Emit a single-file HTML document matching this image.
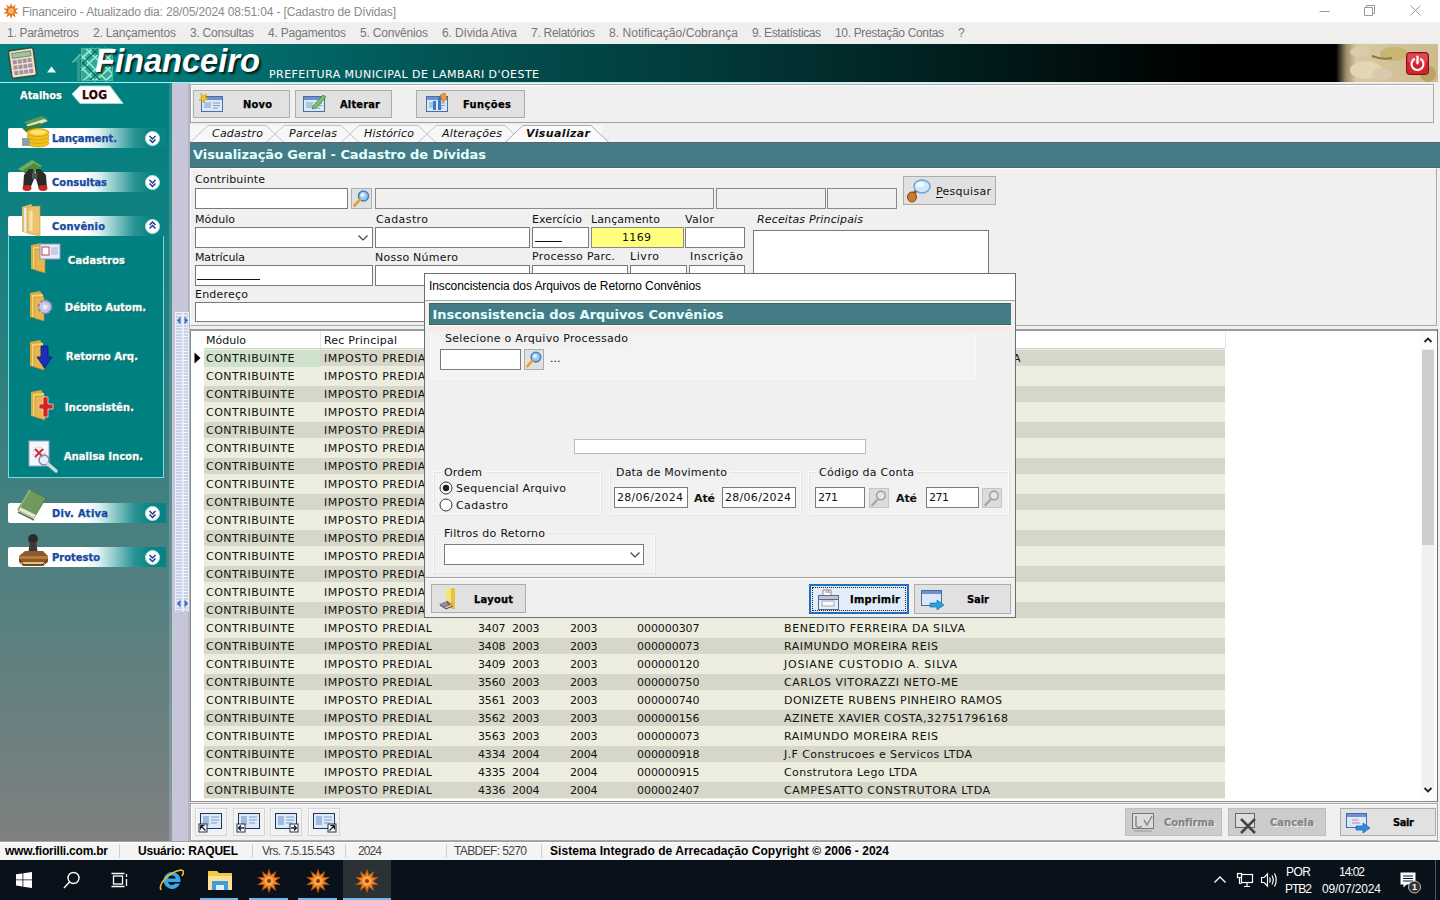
<!DOCTYPE html>
<html lang="pt-BR"><head><meta charset="utf-8"><title>Financeiro - Cadastro de Dívidas</title>
<style>
html,body{margin:0;padding:0}
body{width:1440px;height:900px;overflow:hidden;position:relative;background:#f0f0f0;font-family:"DejaVu Sans",sans-serif}
.b{position:absolute;box-sizing:border-box;display:block}
.t{position:absolute;white-space:nowrap;display:block}
.dv{font-family:"DejaVu Sans",sans-serif}
.dvc{font-family:"DejaVu Sans Condensed","DejaVu Sans",sans-serif;-webkit-text-stroke:.25px currentColor}
.ls{font-family:"Liberation Sans",sans-serif}
</style></head>
<body>
<div class="b " style="left:0px;top:0px;width:1440px;height:22px;background:#fff"></div>
<svg class="b" style="left:3px;top:3px" width="16" height="16" viewBox="0 0 16 16"><path d="M8.0 0.0L9.3 4.0L12.7 1.5L11.4 5.5L15.6 5.5L12.2 8.0L15.6 10.5L11.4 10.5L12.7 14.5L9.3 12.0L8.0 16.0L6.7 12.0L3.3 14.5L4.6 10.5L0.4 10.5L3.8 8.0L0.4 5.5L4.6 5.5L3.3 1.5L6.7 4.0z" fill="#e0711c"/><circle cx="8" cy="8" r="3" fill="#f6b36a"/></svg>
<span class="t ls" style="font-size:12px;line-height:16px;top:3.5px;color:#8a8a8a;letter-spacing:-0.144px;left:22.0px;">Financeiro - Atualizado dia: 28/05/2024 08:51:04 - [Cadastro de Dívidas]</span>
<svg class="b" style="left:1300px;top:0" width="140" height="22" viewBox="0 0 140 22" fill="none" stroke="#9a9a9a" stroke-width="1"><path d="M19.5 11.5h10"/><path d="M64.5 7.5h8v8h-8z M66.5 7.5v-2h8v8h-2"/><path d="M110.5 5.5l10 10 M120.5 5.5l-10 10"/></svg>
<div class="b " style="left:0px;top:22px;width:1440px;height:22px;background:#f1eeee"></div>
<span class="t ls" style="font-size:12px;line-height:16px;top:24.5px;color:#777;letter-spacing:-0.280px;left:7.0px;">1. Parâmetros</span>
<span class="t ls" style="font-size:12px;line-height:16px;top:24.5px;color:#777;letter-spacing:-0.184px;left:93.0px;">2. Lançamentos</span>
<span class="t ls" style="font-size:12px;line-height:16px;top:24.5px;color:#777;letter-spacing:-0.246px;left:190.0px;">3. Consultas</span>
<span class="t ls" style="font-size:12px;line-height:16px;top:24.5px;color:#777;letter-spacing:-0.227px;left:268.0px;">4. Pagamentos</span>
<span class="t ls" style="font-size:12px;line-height:16px;top:24.5px;color:#777;letter-spacing:-0.186px;left:360.0px;">5. Convênios</span>
<span class="t ls" style="font-size:12px;line-height:16px;top:24.5px;color:#777;letter-spacing:-0.122px;left:442.0px;">6. Dívida Ativa</span>
<span class="t ls" style="font-size:12px;line-height:16px;top:24.5px;color:#777;letter-spacing:-0.280px;left:531.0px;">7. Relatórios</span>
<span class="t ls" style="font-size:12px;line-height:16px;top:24.5px;color:#777;letter-spacing:0.042px;left:609.0px;">8. Notificação/Cobrança</span>
<span class="t ls" style="font-size:12px;line-height:16px;top:24.5px;color:#777;letter-spacing:-0.407px;left:752.0px;">9. Estatísticas</span>
<span class="t ls" style="font-size:12px;line-height:16px;top:24.5px;color:#777;letter-spacing:-0.337px;left:835.0px;">10. Prestação Contas</span>
<span class="t ls" style="font-size:12px;line-height:16px;top:24.5px;color:#777;left:958.0px;">?</span>
<div class="b " style="left:0px;top:44px;width:1440px;height:38px;background:linear-gradient(90deg,#038080 0px,#038080 120px,#036a6a 265px,#035050 473px,#023838 723px,#011c1c 973px,#000606 1150px,#000 1220px)"></div>
<div class="b " style="left:0px;top:82px;width:1440px;height:1px;background:linear-gradient(90deg,#a8f0f4 0,#a8f0f4 700px,#e6eeee 1200px)"></div>
<div class="b " style="left:0px;top:43px;width:1440px;height:1px;background:#dfeeee"></div>
<svg class="b" style="left:1336px;top:44px" width="102" height="38" viewBox="0 0 102 38"><defs><linearGradient id="bg1" x1="0" x2="1"><stop offset="0" stop-color="#000"/><stop offset="0.1" stop-color="#9d8d6c"/><stop offset="0.2" stop-color="#d8c9a3"/><stop offset="1" stop-color="#cdbb8e"/></linearGradient></defs><rect width="102" height="38" fill="url(#bg1)"/><ellipse cx="30" cy="26" rx="16" ry="9" fill="#e3d6b4"/><ellipse cx="58" cy="10" rx="14" ry="7" fill="#c9b572"/><ellipse cx="46" cy="30" rx="10" ry="6" fill="#d9c9ae"/><ellipse cx="92" cy="30" rx="8" ry="8" fill="#b9a565"/><ellipse cx="24" cy="8" rx="10" ry="5" fill="#d9cdaa"/><path d="M36 12q10 4 20 2" stroke="#8d7a3c" stroke-width="2" fill="none"/></svg>
<div class="b " style="left:1438px;top:44px;width:2px;height:38px;background:#f0f0f0"></div>
<svg class="b" style="left:1406px;top:52px" width="24" height="24" viewBox="0 0 24 24"><rect x="0.5" y="0.5" width="22" height="22" rx="3" fill="#d3212d" stroke="#7d1016"/><rect x="1.5" y="1.5" width="20" height="9" rx="2" fill="#e9606a" opacity=".6"/><path d="M8 7.2a6 6 0 1 0 7 0" fill="none" stroke="#fff" stroke-width="2.2" stroke-linecap="round"/><path d="M11.5 4.5v7" stroke="#fff" stroke-width="2.2" stroke-linecap="round"/></svg>
<svg class="b" style="left:7px;top:46px" width="32" height="34" viewBox="0 0 32 34"><g transform="rotate(-8 16 17)"><rect x="3" y="3" width="25" height="28" rx="2" fill="#e9e4d2" stroke="#3d4a3a" stroke-width="1.6"/><rect x="6" y="6" width="19" height="5" fill="#9dc49a" stroke="#50624e" stroke-width=".6"/><g fill="#a7909c"><rect x="6" y="13" width="4" height="4"/><rect x="11" y="13" width="4" height="4"/><rect x="16" y="13" width="4" height="4"/><rect x="21" y="13" width="4" height="4"/><rect x="6" y="18.500" width="4" height="4"/><rect x="11" y="18.500" width="4" height="4"/><rect x="16" y="18.500" width="4" height="4"/><rect x="21" y="18.500" width="4" height="4"/><rect x="6" y="24" width="4" height="4"/><rect x="11" y="24" width="4" height="4"/><rect x="16" y="24" width="4" height="4"/><rect x="21" y="24" width="4" height="4"/></g></g></svg>
<svg class="b" style="left:47px;top:66px" width="9" height="7" viewBox="0 0 9 7"><path d="M0 6.500L4.500 0.500L9 6.500z" fill="#e8ffff"/></svg>
<svg class="b" style="left:71px;top:45px" width="44" height="37" viewBox="0 0 44 37"><path d="M2 17L9 9v27h-3v-19z" fill="#2a9a90"/><path d="M1.500 17.500L9.500 9" stroke="#59c4b4" stroke-width="1.400" fill="none"/><path d="M9 12h4v24h-4z" fill="#15807a"/><rect x="10" y="3" width="32" height="33" fill="#34a892"/><g fill="none" stroke="#95ecd4" stroke-width="1.700"><path d="M10 14L22 3M10 26L34 3M12 36L42 8M24 36L42 20M34 36l8-7"/><path d="M14 3l28 26M26 3l16 14M10 10l26 26M10 22l14 14"/></g><g fill="none" stroke="#0f6f68" stroke-width="1.200"><path d="M10 20L28 3M18 36L42 14M20 3l22 20M10 16l20 20"/></g><rect x="10.500" y="3.500" width="31" height="32" fill="none" stroke="#4fb8a4"/></svg>
<span class="t ls" style="font-size:32.7px;line-height:40px;top:41.2px;color:#fff;letter-spacing:-0.039px;left:95.0px;font-weight:bold;font-style:italic;text-shadow:2px 2px 2px rgba(0,0,0,.75);">Financeiro</span>
<span class="t dv" style="font-size:11px;line-height:15px;top:66.5px;color:#fff;letter-spacing:0.440px;left:269.0px;">PREFEITURA MUNICIPAL DE LAMBARI D'OESTE</span>
<div class="b " style="left:0px;top:83px;width:173px;height:759px;background:linear-gradient(180deg,#008080 0%,#058080 8%,#808080 100%)"></div>
<div class="b " style="left:169px;top:83px;width:3px;height:759px;background:linear-gradient(180deg,#2a9090,#8c9a9c)"></div>
<div class="b " style="left:172px;top:83px;width:18px;height:759px;background:#c6c6d8"></div>
<div class="b " style="left:188px;top:83px;width:2px;height:759px;background:#b4b4c6"></div>
<div class="b " style="left:175px;top:312px;width:14px;height:300px;background:repeating-linear-gradient(180deg,#eef 0 1px,transparent 1px 3px),#c9d2e4;border-left:1px solid #e8eef8;border-right:1px solid #e8eef8"><div class="b" style="left:6px;top:0;width:2px;height:300px;background:#e8eef8"></div></div>
<svg class="b" style="left:176px;top:316px" width="13" height="9" viewBox="0 0 13 9"><path d="M4.500 0.500v8L1 4.500z" fill="#3a6fc0"/><path d="M8.500 0.500v8L12 4.500z" fill="#3a6fc0"/></svg>
<svg class="b" style="left:176px;top:599px" width="13" height="9" viewBox="0 0 13 9"><path d="M4.500 0.500v8L1 4.500z" fill="#3a6fc0"/><path d="M8.500 0.500v8L12 4.500z" fill="#3a6fc0"/></svg>
<span class="t dvc" style="font-size:11px;line-height:15px;top:87.5px;color:#fff;letter-spacing:-0.033px;left:20.0px;font-weight:bold;text-shadow:0 0 2px #004a4a;">Atalhos</span>
<svg class="b" style="left:71px;top:85px" width="54" height="20" viewBox="0 0 54 20"><path d="M9 1h30l13 17.500h-43L1 9z" fill="#fff" stroke="#9edcdc" stroke-width="1"/></svg>
<span class="t dvc" style="font-size:12px;line-height:16px;top:87.0px;color:#300;letter-spacing:0.257px;left:82.0px;font-weight:bold;">LOG</span>
<div class="b " style="left:8px;top:128px;width:158px;height:20px;background:linear-gradient(90deg,#fff 0,#fff 76px,#e0f2f2 90px,#86c6c6 108px,#2a9494 126px,#0a8484 142px,#088383 158px);border-radius:2px 0 0 2px"></div>
<span class="t dvc" style="font-size:11px;line-height:15px;top:131.0px;color:#1a4aa0;letter-spacing:-0.015px;left:52.0px;font-weight:bold;text-shadow:0 0 1px #cde;">Lançament.</span>
<svg class="b" style="left:145px;top:131px" width="15" height="15" viewBox="0 0 15 15"><circle cx="7.500" cy="7.500" r="7" fill="#fff" stroke="#bfe3e3"/><g transform="translate(1 1)"><path d="M3.500 4l3 3 3-3M3.500 7.500l3 3 3-3" fill="none" stroke="#163f8c" stroke-width="1.5"/></g></svg>
<div class="b " style="left:8px;top:172px;width:158px;height:20px;background:linear-gradient(90deg,#fff 0,#fff 76px,#e0f2f2 90px,#86c6c6 108px,#2a9494 126px,#0a8484 142px,#088383 158px);border-radius:2px 0 0 2px"></div>
<span class="t dvc" style="font-size:11px;line-height:15px;top:175.0px;color:#1a4aa0;letter-spacing:0.033px;left:52.0px;font-weight:bold;text-shadow:0 0 1px #cde;">Consultas</span>
<svg class="b" style="left:145px;top:175px" width="15" height="15" viewBox="0 0 15 15"><circle cx="7.500" cy="7.500" r="7" fill="#fff" stroke="#bfe3e3"/><g transform="translate(1 1)"><path d="M3.500 4l3 3 3-3M3.500 7.500l3 3 3-3" fill="none" stroke="#163f8c" stroke-width="1.5"/></g></svg>
<div class="b " style="left:8px;top:216px;width:158px;height:20px;background:linear-gradient(90deg,#fff 0,#fff 76px,#e0f2f2 90px,#86c6c6 108px,#2a9494 126px,#0a8484 142px,#088383 158px);border-radius:2px 0 0 2px"></div>
<span class="t dvc" style="font-size:11px;line-height:15px;top:219.0px;color:#1a4aa0;letter-spacing:0.213px;left:52.0px;font-weight:bold;text-shadow:0 0 1px #cde;">Convênio</span>
<svg class="b" style="left:145px;top:219px" width="15" height="15" viewBox="0 0 15 15"><circle cx="7.500" cy="7.500" r="7" fill="#fff" stroke="#bfe3e3"/><g transform="translate(1 1)"><path d="M3.500 8.500l3-3 3 3M3.500 5l3-3 3 3" fill="none" stroke="#163f8c" stroke-width="1.5"/></g></svg>
<div class="b " style="left:8px;top:503px;width:158px;height:20px;background:linear-gradient(90deg,#fff 0,#fff 76px,#e0f2f2 90px,#86c6c6 108px,#2a9494 126px,#0a8484 142px,#088383 158px);border-radius:2px 0 0 2px"></div>
<span class="t dvc" style="font-size:11px;line-height:15px;top:506.0px;color:#1a4aa0;letter-spacing:0.303px;left:52.0px;font-weight:bold;text-shadow:0 0 1px #cde;">Div. Ativa</span>
<svg class="b" style="left:145px;top:506px" width="15" height="15" viewBox="0 0 15 15"><circle cx="7.500" cy="7.500" r="7" fill="#fff" stroke="#bfe3e3"/><g transform="translate(1 1)"><path d="M3.500 4l3 3 3-3M3.500 7.500l3 3 3-3" fill="none" stroke="#163f8c" stroke-width="1.5"/></g></svg>
<div class="b " style="left:8px;top:547px;width:158px;height:20px;background:linear-gradient(90deg,#fff 0,#fff 76px,#e0f2f2 90px,#86c6c6 108px,#2a9494 126px,#0a8484 142px,#088383 158px);border-radius:2px 0 0 2px"></div>
<span class="t dvc" style="font-size:11px;line-height:15px;top:550.0px;color:#1a4aa0;letter-spacing:0.028px;left:52.0px;font-weight:bold;text-shadow:0 0 1px #cde;">Protesto</span>
<svg class="b" style="left:145px;top:550px" width="15" height="15" viewBox="0 0 15 15"><circle cx="7.500" cy="7.500" r="7" fill="#fff" stroke="#bfe3e3"/><g transform="translate(1 1)"><path d="M3.500 4l3 3 3-3M3.500 7.500l3 3 3-3" fill="none" stroke="#163f8c" stroke-width="1.5"/></g></svg>
<div class="b " style="left:8px;top:236px;width:156px;height:242px;background:#008080;border:1px solid #7fdada;border-top:none"></div>
<span class="t dvc" style="font-size:11px;line-height:15px;top:252.5px;color:#f4ffff;letter-spacing:0.138px;left:68.0px;font-weight:bold;text-shadow:1px 1px 1px #044,0 0 2px #8dd;">Cadastros</span>
<span class="t dvc" style="font-size:11px;line-height:15px;top:299.5px;color:#f4ffff;letter-spacing:0.026px;left:65.0px;font-weight:bold;text-shadow:1px 1px 1px #044,0 0 2px #8dd;">Débito Autom.</span>
<span class="t dvc" style="font-size:11px;line-height:15px;top:348.5px;color:#f4ffff;letter-spacing:0.052px;left:66.0px;font-weight:bold;text-shadow:1px 1px 1px #044,0 0 2px #8dd;">Retorno Arq.</span>
<span class="t dvc" style="font-size:11px;line-height:15px;top:399.5px;color:#f4ffff;letter-spacing:0.103px;left:65.0px;font-weight:bold;text-shadow:1px 1px 1px #044,0 0 2px #8dd;">Inconsistên.</span>
<span class="t dvc" style="font-size:11px;line-height:15px;top:448.5px;color:#f4ffff;letter-spacing:0.048px;left:64.0px;font-weight:bold;text-shadow:1px 1px 1px #044,0 0 2px #8dd;">Analisa Incon.</span>
<svg class="b" style="left:18px;top:114px" width="34" height="36" viewBox="0 0 34 36"><path d="M6 8l18-6 6 3-18 7z" fill="#5b9a46"/><path d="M8 11l18-6 4 2-18 7z" fill="#d8e8cf"/><path d="M4 14l18-5 4 3-18 6z" fill="#3f7d35"/><g fill="#f2c21b" stroke="#c99a0a" stroke-width=".7"><ellipse cx="20" cy="29" rx="11" ry="4"/><ellipse cx="20" cy="25.500" rx="11" ry="4"/><ellipse cx="20" cy="22" rx="11" ry="4"/><ellipse cx="20" cy="18.500" rx="11" ry="4"/></g><ellipse cx="20" cy="18.300" rx="8" ry="2.600" fill="#fbe27a"/><rect x="4" y="24" width="8" height="8" fill="#8fa39a"/></svg>
<svg class="b" style="left:16px;top:157px" width="36" height="36" viewBox="0 0 36 36"><path d="M2 12l14-9 10 6-14 9z" fill="#6fae5a"/><path d="M6 14l12-8 8 5-12 8z" fill="#4c8c3f"/><g fill="#2b2b2b"><path d="M8 18l5-6h4l1 10-4 10h-7z"/><path d="M20 12h4l6 6 1 14h-8l-3-10z"/></g><ellipse cx="11" cy="31" rx="4.500" ry="3" fill="#c7251f"/><ellipse cx="27" cy="31" rx="4.500" ry="3" fill="#c7251f"/><rect x="16" y="16" width="5" height="6" fill="#555"/></svg>
<svg class="b" style="left:19px;top:203px" width="26" height="34" viewBox="0 0 26 34"><path d="M3 4l9-3 2 3v27l-11-2z" fill="#d9bd7a"/><path d="M5 5l12-2v28l-12-2z" fill="#f4ead0"/><path d="M8 4l13-1v30l-13-3z" fill="#e9c36e" stroke="#c09b48" stroke-width=".6"/><path d="M12 8v20" stroke="#f6e3aa" stroke-width="3"/></svg>
<svg class="b" style="left:28px;top:242px" width="34" height="34" viewBox="0 0 34 34"><path d="M3 3l10-2 2 3v25l-12-2z" fill="#d9a93e"/><path d="M5 5l11-1v26l-11-3z" fill="#f2d27c"/><path d="M7 7l10 0v24l-10-3z" fill="#e8b64a" stroke="#b98a2a" stroke-width=".6"/><rect x="12" y="2" width="20" height="15" fill="#e8ecf8" stroke="#8c94c8"/><rect x="14" y="5" width="7" height="8" fill="#fff" stroke="#b04a5a"/><rect x="23" y="5" width="7" height="8" fill="#c6cde6"/></svg>
<svg class="b" style="left:27px;top:290px" width="34" height="34" viewBox="0 0 34 34"><path d="M3 3l10-2 2 3v25l-12-2z" fill="#d9a93e"/><path d="M5 5l11-1v26l-11-3z" fill="#f2d27c"/><path d="M7 7l10 0v24l-10-3z" fill="#e8b64a" stroke="#b98a2a" stroke-width=".6"/><circle cx="18" cy="17" r="6.500" fill="#c9c4e2" stroke="#8d86c2" stroke-width="2" stroke-dasharray="3 2"/><circle cx="18" cy="17" r="2.500" fill="#eeeaf8"/></svg>
<svg class="b" style="left:27px;top:339px" width="34" height="34" viewBox="0 0 34 34"><path d="M3 3l10-2 2 3v25l-12-2z" fill="#d9a93e"/><path d="M5 5l11-1v26l-11-3z" fill="#f2d27c"/><path d="M7 7l10 0v24l-10-3z" fill="#e8b64a" stroke="#b98a2a" stroke-width=".6"/><path d="M14 7h7v11h4l-7.500 11-7.500-11h4z" fill="#1b2fb8" stroke="#0a1470" stroke-width=".8"/></svg>
<svg class="b" style="left:28px;top:389px" width="34" height="34" viewBox="0 0 34 34"><path d="M3 3l10-2 2 3v25l-12-2z" fill="#d9a93e"/><path d="M5 5l11-1v26l-11-3z" fill="#f2d27c"/><path d="M7 7l10 0v24l-10-3z" fill="#e8b64a" stroke="#b98a2a" stroke-width=".6"/><path d="M15 8h5v7h5v5h-5v8h-5v-8h-4v-5h4z" fill="#d32323" stroke="#f6d6d6" stroke-width=".8"/></svg>
<svg class="b" style="left:26px;top:439px" width="34" height="34" viewBox="0 0 34 34"><rect x="3" y="2" width="20" height="25" fill="#f4f6fb" stroke="#9aa6bd"/><circle cx="13" cy="14" r="6" fill="none" stroke="#b8c0d0" stroke-dasharray="2 2"/><path d="M9 10l8 8M17 10l-8 8" stroke="#d42a3a" stroke-width="2"/><circle cx="18" cy="21" r="5" fill="#dfeaf5" fill-opacity=".6" stroke="#7b8aa0" stroke-width="1.5"/><path d="M22 25l8 7" stroke="#cfd8e4" stroke-width="3.500" stroke-linecap="round"/></svg>
<svg class="b" style="left:16px;top:488px" width="34" height="34" viewBox="0 0 34 34"><path d="M14 2l16 8-12 20-16-8z" fill="#6f9a5e" stroke="#4d7342" stroke-width=".8"/><path d="M2 22l16 8 2-3-16-8z" fill="#e9e4cf"/><path d="M2 24l16 8" stroke="#4d7342" stroke-width="1.5"/><path d="M14 2l-12 20" stroke="#89b178" stroke-width="2"/></svg>
<svg class="b" style="left:15px;top:532px" width="36" height="36" viewBox="0 0 36 36"><circle cx="18" cy="7" r="5" fill="#2c2c2c"/><path d="M15 10h6l2 12h-10z" fill="#3a3a3a"/><path d="M4 24l6-5h18l5 5v6l-5 4h-20l-4-4z" fill="#8a5a2c"/><path d="M4 24h29v3h-29z" fill="#b57b3e"/><path d="M6 31h24" stroke="#e1c08a" stroke-width="2"/><path d="M4 27l5 6h18l6-6" fill="none" stroke="#5b3513" stroke-width="1"/></svg>
<div class="b " style="left:190px;top:83px;width:1250px;height:759px;background:#f0f0f0"></div>
<div class="b " style="left:190px;top:84px;width:1244px;height:39px;background:#f0f0f0;border:1px solid #a8a8a8;border-bottom-color:#a0a0a0;box-shadow:inset 1px 1px 0 #fff"></div>
<div class="b btn" style="left:193px;top:90px;width:97px;height:28px;background:#e1e1e1;border:1px solid #adadad;"></div>
<svg class="b" style="left:199px;top:92px" width="28" height="24" viewBox="0 0 28 24"><rect x="2.500" y="4.500" width="21" height="15" fill="#dbe8f6" stroke="#4a6ea8"/><rect x="3" y="5" width="20" height="3" fill="#6d92cf"/><rect x="5" y="10" width="7" height="6" fill="#a9c4e6"/><path d="M14 11h7M14 13.500h7M14 16h5" stroke="#7f9fc8"/><path d="M2 1l2.500 3 3-2-1 3.500 3 1.500-3.500 1-1 3-1.500-3-3.500 0 2.500-2z" fill="#f6c415" stroke="#c68a00" stroke-width=".5"/></svg>
<span class="t dvc" style="font-size:11px;line-height:15px;top:97.0px;color:#000;letter-spacing:0.222px;left:243.0px;font-weight:bold;">Novo</span>
<div class="b btn" style="left:295px;top:90px;width:97px;height:28px;background:#e1e1e1;border:1px solid #adadad;"></div>
<svg class="b" style="left:301px;top:92px" width="28" height="24" viewBox="0 0 28 24"><rect x="2.500" y="4.500" width="21" height="15" fill="#dbe8f6" stroke="#4a6ea8"/><rect x="3" y="5" width="20" height="3" fill="#6d92cf"/><rect x="5" y="10" width="7" height="6" fill="#a9c4e6"/><path d="M14 11h7M14 13.500h7M14 16h5" stroke="#7f9fc8"/><path d="M12 14l10-11 3 2-10 11-4 1z" fill="#7fbf6a" stroke="#3d7a3a" stroke-width=".7"/></svg>
<span class="t dvc" style="font-size:11px;line-height:15px;top:97.0px;color:#000;letter-spacing:0.177px;left:340.0px;font-weight:bold;">Alterar</span>
<div class="b btn" style="left:416px;top:90px;width:109px;height:28px;background:#e1e1e1;border:1px solid #adadad;"></div>
<svg class="b" style="left:424px;top:92px" width="28" height="24" viewBox="0 0 28 24"><rect x="2.500" y="4.500" width="21" height="15" fill="#dbe8f6" stroke="#4a6ea8"/><rect x="3" y="5" width="20" height="3" fill="#6d92cf"/><rect x="5" y="10" width="7" height="6" fill="#a9c4e6"/><path d="M14 11h7M14 13.500h7M14 16h5" stroke="#7f9fc8"/><path d="M9 18v-9h3v9zM14 18v-13h3v13z" fill="#3d78c8"/><path d="M16 3l5-2 2 6-4 3z" fill="#f39a2a" stroke="#b86a10" stroke-width=".6"/></svg>
<span class="t dvc" style="font-size:11px;line-height:15px;top:97.0px;color:#000;letter-spacing:0.403px;left:463.0px;font-weight:bold;">Funções</span>
<div class="b " style="left:190px;top:123px;width:1250px;height:20px;background:#f0f0f0"></div>
<div class="b " style="left:190px;top:125px;width:412px;height:18px;background:#f7f7f7"></div>
<svg class="b" style="left:190px;top:123px" width="440" height="20" viewBox="0 0 440 20" fill="none" stroke="#c4c4c4" stroke-width="1"><path d="M0 19.500L18 2.500H76L94 19.500" fill="none"/><path d="M76 19.500L94 2.500H151L169 19.500" fill="none"/><path d="M151 19.500L169 2.500H228L246 19.500" fill="none"/><path d="M228 19.500L246 2.500H315L333 19.500" fill="none"/><path d="M315 19.500L333 2.500H401L419 19.500" fill="#fbfbfb" stroke="#aaa"/></svg>
<span class="t dv" style="font-size:11px;line-height:15px;top:126.0px;color:#111;letter-spacing:0.223px;left:212.0px;font-style:oblique;">Cadastro</span>
<span class="t dv" style="font-size:11px;line-height:15px;top:126.0px;color:#111;letter-spacing:0.251px;left:289.0px;font-style:oblique;">Parcelas</span>
<span class="t dv" style="font-size:11px;line-height:15px;top:126.0px;color:#111;letter-spacing:0.193px;left:364.0px;font-style:oblique;">Histórico</span>
<span class="t dv" style="font-size:11px;line-height:15px;top:126.0px;color:#111;letter-spacing:0.200px;left:442.0px;font-style:oblique;">Alterações</span>
<span class="t dv" style="font-size:11px;line-height:15px;top:126.0px;color:#111;letter-spacing:0.369px;left:526.0px;font-weight:bold;font-style:oblique;">Visualizar</span>
<div class="b " style="left:190px;top:142px;width:1250px;height:26px;background:#447b84;border-top:1px solid #5b6668;border-bottom:1px solid #50666b"></div>
<span class="t dv" style="font-size:13px;line-height:18px;top:146.0px;color:#e4ffff;letter-spacing:-0.068px;left:193.0px;font-weight:bold;">Visualização Geral - Cadastro de Dívidas</span>
<div class="b " style="left:190px;top:168px;width:1247px;height:158px;background:#f0f0f0;border:1px solid #a9a9a9;border-top-color:#fff;border-left-color:#fff"></div>
<span class="t dv" style="font-size:11px;line-height:15px;top:171.5px;color:#111;letter-spacing:0.151px;left:195.0px;">Contribuinte</span>
<div class="b inp" style="left:195px;top:188px;width:153px;height:21px;background:#fff;border:1px solid #7a7a7a"></div>
<div class="b " style="left:351px;top:188px;width:21px;height:21px;background:#e1e1e1;border:1px solid #adadad"></div>
<svg class="b" style="left:351px;top:188px" width="21" height="21" viewBox="0 0 21 21"><circle cx="12.500" cy="8" r="5" fill="#9ec9f2" stroke="#3f7fc6" stroke-width="1.600"/><circle cx="11.500" cy="7" r="2" fill="#e8f4ff"/><path d="M9 11.500l-5.500 6" stroke="#e8a13a" stroke-width="2.800" stroke-linecap="round"/></svg>
<div class="b inp" style="left:375px;top:188px;width:339px;height:21px;background:#f0f0f0;border:1px solid #8a8a8a"></div>
<div class="b inp" style="left:716px;top:188px;width:110px;height:21px;background:#f0f0f0;border:1px solid #8a8a8a"></div>
<div class="b inp" style="left:827px;top:188px;width:70px;height:21px;background:#f0f0f0;border:1px solid #8a8a8a"></div>
<div class="b " style="left:903px;top:176px;width:93px;height:29px;background:#e1e1e1;border:1px solid #adadad"></div>
<svg class="b" style="left:906px;top:178px" width="28" height="26" viewBox="0 0 28 26"><ellipse cx="16" cy="8.500" rx="8" ry="6.500" fill="#cfe6fb" stroke="#6ea6dc" stroke-width="1.500"/><ellipse cx="14" cy="6.500" rx="4" ry="2.500" fill="#f4faff"/><path d="M10 13l-5 6" stroke="#8a5a2a" stroke-width="3"/><ellipse cx="6" cy="19" rx="4.500" ry="5" fill="#c97a2a" stroke="#7d4512"/></svg>
<span class="t dv" style="font-size:11px;line-height:15px;top:183.5px;color:#111;letter-spacing:0.282px;left:936.0px;">Pesquisar</span>
<div class="b " style="left:936px;top:197px;width:7px;height:1px;background:#111"></div>
<span class="t dv" style="font-size:11px;line-height:15px;top:211.5px;color:#111;letter-spacing:0.008px;left:195.0px;">Módulo</span>
<span class="t dv" style="font-size:11px;line-height:15px;top:211.5px;color:#111;letter-spacing:0.400px;left:376.0px;">Cadastro</span>
<span class="t dv" style="font-size:11px;line-height:15px;top:211.5px;color:#111;letter-spacing:0.111px;left:532.0px;">Exercício</span>
<span class="t dv" style="font-size:11px;line-height:15px;top:211.5px;color:#111;letter-spacing:0.097px;left:591.0px;">Lançamento</span>
<span class="t dv" style="font-size:11px;line-height:15px;top:211.5px;color:#111;letter-spacing:0.320px;left:685.0px;">Valor</span>
<span class="t dv" style="font-size:11px;line-height:15px;top:211.5px;color:#111;letter-spacing:0.147px;left:757.0px;font-style:oblique;">Receitas Principais</span>
<div class="b inp" style="left:195px;top:227px;width:178px;height:21px;background:#fff;border:1px solid #7a7a7a"></div>
<svg class="b" style="left:357px;top:234px" width="12" height="8" viewBox="0 0 12 8"><path d="M1.500 1.500l4.500 4.500 4.500-4.500" fill="none" stroke="#444" stroke-width="1.200"/></svg>
<div class="b inp" style="left:375px;top:227px;width:155px;height:21px;background:#fff;border:1px solid #7a7a7a"></div>
<div class="b inp" style="left:532px;top:227px;width:57px;height:21px;background:#fff;border:1px solid #7a7a7a"></div>
<div class="b " style="left:535px;top:241px;width:27px;height:1px;background:#111"></div>
<div class="b inp" style="left:591px;top:227px;width:93px;height:21px;background:#ffff7d;border:1px solid #8a8a8a"></div>
<span class="t dv" style="font-size:11px;line-height:15px;top:230.0px;color:#111;letter-spacing:0.335px;left:622.0px;">1169</span>
<div class="b inp" style="left:685px;top:227px;width:60px;height:21px;background:#fff;border:1px solid #7a7a7a"></div>
<div class="b inp" style="left:753px;top:230px;width:236px;height:58px;background:#fff;border:1px solid #7a7a7a"></div>
<span class="t dv" style="font-size:11px;line-height:15px;top:249.5px;color:#111;letter-spacing:-0.117px;left:195.0px;">Matrícula</span>
<span class="t dv" style="font-size:11px;line-height:15px;top:249.5px;color:#111;letter-spacing:0.242px;left:375.0px;">Nosso Número</span>
<span class="t dv" style="font-size:11px;line-height:15px;top:248.5px;color:#111;letter-spacing:0.334px;left:532.0px;">Processo Parc.</span>
<span class="t dv" style="font-size:11px;line-height:15px;top:248.5px;color:#111;letter-spacing:0.574px;left:630.0px;">Livro</span>
<span class="t dv" style="font-size:11px;line-height:15px;top:248.5px;color:#111;letter-spacing:0.488px;left:690.0px;">Inscrição</span>
<div class="b inp" style="left:195px;top:265px;width:178px;height:21px;background:#fff;border:1px solid #7a7a7a"></div>
<div class="b " style="left:197px;top:279px;width:63px;height:1px;background:#111"></div>
<div class="b inp" style="left:375px;top:265px;width:155px;height:21px;background:#fff;border:1px solid #7a7a7a"></div>
<div class="b inp" style="left:532px;top:265px;width:96px;height:21px;background:#fff;border:1px solid #7a7a7a"></div>
<div class="b inp" style="left:630px;top:265px;width:57px;height:21px;background:#fff;border:1px solid #7a7a7a"></div>
<div class="b inp" style="left:689px;top:265px;width:56px;height:21px;background:#fff;border:1px solid #7a7a7a"></div>
<span class="t dv" style="font-size:11px;line-height:15px;top:286.5px;color:#111;letter-spacing:0.215px;left:195.0px;">Endereço</span>
<div class="b inp" style="left:195px;top:302px;width:520px;height:20px;background:#fff;border:1px solid #7a7a7a"></div>
<div class="b " style="left:190px;top:329px;width:1248px;height:473px;background:#fff;border:1px solid #8a8a8a;border-top:2px solid #9a9a9a"></div>
<span class="t dv" style="font-size:11px;line-height:15px;top:332.5px;color:#111;letter-spacing:0.008px;left:206.0px;">Módulo</span>
<span class="t dv" style="font-size:11px;line-height:15px;top:332.5px;color:#111;letter-spacing:0.222px;left:324.0px;">Rec Principal</span>
<div class="b " style="left:204px;top:348px;width:1021px;height:1px;background:#d2d2cc"></div>
<div class="b " style="left:320px;top:332px;width:1px;height:16px;background:#e4e4e4"></div>
<div class="b " style="left:1225px;top:332px;width:1px;height:16px;background:#e4e4e4"></div>
<div class="b " style="left:204px;top:349px;width:1021px;height:18px;background:#ecedde"></div>
<div class="b " style="left:204px;top:350px;width:1021px;height:16px;background:#d6d7c8"></div>
<div class="b " style="left:204px;top:350px;width:116px;height:17px;background:#cfe2cc"></div>
<span class="t dv" style="font-size:11px;line-height:15px;top:350.5px;color:#111;letter-spacing:0.508px;left:206.0px;">CONTRIBUINTE</span>
<span class="t dv" style="font-size:11px;line-height:15px;top:350.5px;color:#111;letter-spacing:0.537px;left:324.0px;">IMPOSTO PREDIAL</span>
<div class="b " style="left:204px;top:367px;width:1021px;height:18px;background:#ecedde"></div>
<span class="t dv" style="font-size:11px;line-height:15px;top:368.5px;color:#111;letter-spacing:0.508px;left:206.0px;">CONTRIBUINTE</span>
<span class="t dv" style="font-size:11px;line-height:15px;top:368.5px;color:#111;letter-spacing:0.537px;left:324.0px;">IMPOSTO PREDIAL</span>
<div class="b " style="left:204px;top:385px;width:1021px;height:18px;background:#ecedde"></div>
<div class="b " style="left:204px;top:386px;width:1021px;height:16px;background:#d6d7c8"></div>
<span class="t dv" style="font-size:11px;line-height:15px;top:386.5px;color:#111;letter-spacing:0.508px;left:206.0px;">CONTRIBUINTE</span>
<span class="t dv" style="font-size:11px;line-height:15px;top:386.5px;color:#111;letter-spacing:0.537px;left:324.0px;">IMPOSTO PREDIAL</span>
<div class="b " style="left:204px;top:403px;width:1021px;height:18px;background:#ecedde"></div>
<span class="t dv" style="font-size:11px;line-height:15px;top:404.5px;color:#111;letter-spacing:0.508px;left:206.0px;">CONTRIBUINTE</span>
<span class="t dv" style="font-size:11px;line-height:15px;top:404.5px;color:#111;letter-spacing:0.537px;left:324.0px;">IMPOSTO PREDIAL</span>
<div class="b " style="left:204px;top:421px;width:1021px;height:18px;background:#ecedde"></div>
<div class="b " style="left:204px;top:422px;width:1021px;height:16px;background:#d6d7c8"></div>
<span class="t dv" style="font-size:11px;line-height:15px;top:422.5px;color:#111;letter-spacing:0.508px;left:206.0px;">CONTRIBUINTE</span>
<span class="t dv" style="font-size:11px;line-height:15px;top:422.5px;color:#111;letter-spacing:0.537px;left:324.0px;">IMPOSTO PREDIAL</span>
<div class="b " style="left:204px;top:439px;width:1021px;height:18px;background:#ecedde"></div>
<span class="t dv" style="font-size:11px;line-height:15px;top:440.5px;color:#111;letter-spacing:0.508px;left:206.0px;">CONTRIBUINTE</span>
<span class="t dv" style="font-size:11px;line-height:15px;top:440.5px;color:#111;letter-spacing:0.537px;left:324.0px;">IMPOSTO PREDIAL</span>
<div class="b " style="left:204px;top:457px;width:1021px;height:18px;background:#ecedde"></div>
<div class="b " style="left:204px;top:458px;width:1021px;height:16px;background:#d6d7c8"></div>
<span class="t dv" style="font-size:11px;line-height:15px;top:458.5px;color:#111;letter-spacing:0.508px;left:206.0px;">CONTRIBUINTE</span>
<span class="t dv" style="font-size:11px;line-height:15px;top:458.5px;color:#111;letter-spacing:0.537px;left:324.0px;">IMPOSTO PREDIAL</span>
<div class="b " style="left:204px;top:475px;width:1021px;height:18px;background:#ecedde"></div>
<span class="t dv" style="font-size:11px;line-height:15px;top:476.5px;color:#111;letter-spacing:0.508px;left:206.0px;">CONTRIBUINTE</span>
<span class="t dv" style="font-size:11px;line-height:15px;top:476.5px;color:#111;letter-spacing:0.537px;left:324.0px;">IMPOSTO PREDIAL</span>
<div class="b " style="left:204px;top:493px;width:1021px;height:18px;background:#ecedde"></div>
<div class="b " style="left:204px;top:494px;width:1021px;height:16px;background:#d6d7c8"></div>
<span class="t dv" style="font-size:11px;line-height:15px;top:494.5px;color:#111;letter-spacing:0.508px;left:206.0px;">CONTRIBUINTE</span>
<span class="t dv" style="font-size:11px;line-height:15px;top:494.5px;color:#111;letter-spacing:0.537px;left:324.0px;">IMPOSTO PREDIAL</span>
<div class="b " style="left:204px;top:511px;width:1021px;height:18px;background:#ecedde"></div>
<span class="t dv" style="font-size:11px;line-height:15px;top:512.5px;color:#111;letter-spacing:0.508px;left:206.0px;">CONTRIBUINTE</span>
<span class="t dv" style="font-size:11px;line-height:15px;top:512.5px;color:#111;letter-spacing:0.537px;left:324.0px;">IMPOSTO PREDIAL</span>
<div class="b " style="left:204px;top:529px;width:1021px;height:18px;background:#ecedde"></div>
<div class="b " style="left:204px;top:530px;width:1021px;height:16px;background:#d6d7c8"></div>
<span class="t dv" style="font-size:11px;line-height:15px;top:530.5px;color:#111;letter-spacing:0.508px;left:206.0px;">CONTRIBUINTE</span>
<span class="t dv" style="font-size:11px;line-height:15px;top:530.5px;color:#111;letter-spacing:0.537px;left:324.0px;">IMPOSTO PREDIAL</span>
<div class="b " style="left:204px;top:547px;width:1021px;height:18px;background:#ecedde"></div>
<span class="t dv" style="font-size:11px;line-height:15px;top:548.5px;color:#111;letter-spacing:0.508px;left:206.0px;">CONTRIBUINTE</span>
<span class="t dv" style="font-size:11px;line-height:15px;top:548.5px;color:#111;letter-spacing:0.537px;left:324.0px;">IMPOSTO PREDIAL</span>
<div class="b " style="left:204px;top:565px;width:1021px;height:18px;background:#ecedde"></div>
<div class="b " style="left:204px;top:566px;width:1021px;height:16px;background:#d6d7c8"></div>
<span class="t dv" style="font-size:11px;line-height:15px;top:566.5px;color:#111;letter-spacing:0.508px;left:206.0px;">CONTRIBUINTE</span>
<span class="t dv" style="font-size:11px;line-height:15px;top:566.5px;color:#111;letter-spacing:0.537px;left:324.0px;">IMPOSTO PREDIAL</span>
<div class="b " style="left:204px;top:583px;width:1021px;height:18px;background:#ecedde"></div>
<span class="t dv" style="font-size:11px;line-height:15px;top:584.5px;color:#111;letter-spacing:0.508px;left:206.0px;">CONTRIBUINTE</span>
<span class="t dv" style="font-size:11px;line-height:15px;top:584.5px;color:#111;letter-spacing:0.537px;left:324.0px;">IMPOSTO PREDIAL</span>
<div class="b " style="left:204px;top:601px;width:1021px;height:18px;background:#ecedde"></div>
<div class="b " style="left:204px;top:602px;width:1021px;height:16px;background:#d6d7c8"></div>
<span class="t dv" style="font-size:11px;line-height:15px;top:602.5px;color:#111;letter-spacing:0.508px;left:206.0px;">CONTRIBUINTE</span>
<span class="t dv" style="font-size:11px;line-height:15px;top:602.5px;color:#111;letter-spacing:0.537px;left:324.0px;">IMPOSTO PREDIAL</span>
<div class="b " style="left:204px;top:619px;width:1021px;height:18px;background:#ecedde"></div>
<span class="t dv" style="font-size:11px;line-height:15px;top:620.5px;color:#111;letter-spacing:0.508px;left:206.0px;">CONTRIBUINTE</span>
<span class="t dv" style="font-size:11px;line-height:15px;top:620.5px;color:#111;letter-spacing:0.537px;left:324.0px;">IMPOSTO PREDIAL</span>
<span class="t dv" style="font-size:11px;line-height:15px;top:620.5px;color:#111;letter-spacing:-0.165px;left:478.0px;">3407</span>
<span class="t dv" style="font-size:11px;line-height:15px;top:620.5px;color:#111;letter-spacing:-0.165px;left:512.0px;">2003</span>
<span class="t dv" style="font-size:11px;line-height:15px;top:620.5px;color:#111;letter-spacing:-0.165px;left:570.0px;">2003</span>
<span class="t dv" style="font-size:11px;line-height:15px;top:620.5px;color:#111;letter-spacing:-0.061px;left:637.0px;">000000307</span>
<span class="t dv" style="font-size:11px;line-height:15px;top:620.5px;color:#111;letter-spacing:0.599px;left:784.0px;">BENEDITO FERREIRA DA SILVA</span>
<div class="b " style="left:204px;top:637px;width:1021px;height:18px;background:#ecedde"></div>
<div class="b " style="left:204px;top:638px;width:1021px;height:16px;background:#d6d7c8"></div>
<span class="t dv" style="font-size:11px;line-height:15px;top:638.5px;color:#111;letter-spacing:0.508px;left:206.0px;">CONTRIBUINTE</span>
<span class="t dv" style="font-size:11px;line-height:15px;top:638.5px;color:#111;letter-spacing:0.537px;left:324.0px;">IMPOSTO PREDIAL</span>
<span class="t dv" style="font-size:11px;line-height:15px;top:638.5px;color:#111;letter-spacing:-0.165px;left:478.0px;">3408</span>
<span class="t dv" style="font-size:11px;line-height:15px;top:638.5px;color:#111;letter-spacing:-0.165px;left:512.0px;">2003</span>
<span class="t dv" style="font-size:11px;line-height:15px;top:638.5px;color:#111;letter-spacing:-0.165px;left:570.0px;">2003</span>
<span class="t dv" style="font-size:11px;line-height:15px;top:638.5px;color:#111;letter-spacing:-0.061px;left:637.0px;">000000073</span>
<span class="t dv" style="font-size:11px;line-height:15px;top:638.5px;color:#111;letter-spacing:0.531px;left:784.0px;">RAIMUNDO MOREIRA REIS</span>
<div class="b " style="left:204px;top:655px;width:1021px;height:18px;background:#ecedde"></div>
<span class="t dv" style="font-size:11px;line-height:15px;top:656.5px;color:#111;letter-spacing:0.508px;left:206.0px;">CONTRIBUINTE</span>
<span class="t dv" style="font-size:11px;line-height:15px;top:656.5px;color:#111;letter-spacing:0.537px;left:324.0px;">IMPOSTO PREDIAL</span>
<span class="t dv" style="font-size:11px;line-height:15px;top:656.5px;color:#111;letter-spacing:-0.165px;left:478.0px;">3409</span>
<span class="t dv" style="font-size:11px;line-height:15px;top:656.5px;color:#111;letter-spacing:-0.165px;left:512.0px;">2003</span>
<span class="t dv" style="font-size:11px;line-height:15px;top:656.5px;color:#111;letter-spacing:-0.165px;left:570.0px;">2003</span>
<span class="t dv" style="font-size:11px;line-height:15px;top:656.5px;color:#111;letter-spacing:-0.061px;left:637.0px;">000000120</span>
<span class="t dv" style="font-size:11px;line-height:15px;top:656.5px;color:#111;letter-spacing:0.787px;left:784.0px;">JOSIANE CUSTODIO A. SILVA</span>
<div class="b " style="left:204px;top:673px;width:1021px;height:18px;background:#ecedde"></div>
<div class="b " style="left:204px;top:674px;width:1021px;height:16px;background:#d6d7c8"></div>
<span class="t dv" style="font-size:11px;line-height:15px;top:674.5px;color:#111;letter-spacing:0.508px;left:206.0px;">CONTRIBUINTE</span>
<span class="t dv" style="font-size:11px;line-height:15px;top:674.5px;color:#111;letter-spacing:0.537px;left:324.0px;">IMPOSTO PREDIAL</span>
<span class="t dv" style="font-size:11px;line-height:15px;top:674.5px;color:#111;letter-spacing:-0.165px;left:478.0px;">3560</span>
<span class="t dv" style="font-size:11px;line-height:15px;top:674.5px;color:#111;letter-spacing:-0.165px;left:512.0px;">2003</span>
<span class="t dv" style="font-size:11px;line-height:15px;top:674.5px;color:#111;letter-spacing:-0.165px;left:570.0px;">2003</span>
<span class="t dv" style="font-size:11px;line-height:15px;top:674.5px;color:#111;letter-spacing:-0.061px;left:637.0px;">000000750</span>
<span class="t dv" style="font-size:11px;line-height:15px;top:674.5px;color:#111;letter-spacing:0.536px;left:784.0px;">CARLOS VITORAZZI NETO-ME</span>
<div class="b " style="left:204px;top:691px;width:1021px;height:18px;background:#ecedde"></div>
<span class="t dv" style="font-size:11px;line-height:15px;top:692.5px;color:#111;letter-spacing:0.508px;left:206.0px;">CONTRIBUINTE</span>
<span class="t dv" style="font-size:11px;line-height:15px;top:692.5px;color:#111;letter-spacing:0.537px;left:324.0px;">IMPOSTO PREDIAL</span>
<span class="t dv" style="font-size:11px;line-height:15px;top:692.5px;color:#111;letter-spacing:-0.165px;left:478.0px;">3561</span>
<span class="t dv" style="font-size:11px;line-height:15px;top:692.5px;color:#111;letter-spacing:-0.165px;left:512.0px;">2003</span>
<span class="t dv" style="font-size:11px;line-height:15px;top:692.5px;color:#111;letter-spacing:-0.165px;left:570.0px;">2003</span>
<span class="t dv" style="font-size:11px;line-height:15px;top:692.5px;color:#111;letter-spacing:-0.061px;left:637.0px;">000000740</span>
<span class="t dv" style="font-size:11px;line-height:15px;top:692.5px;color:#111;letter-spacing:0.435px;left:784.0px;">DONIZETE RUBENS PINHEIRO RAMOS</span>
<div class="b " style="left:204px;top:709px;width:1021px;height:18px;background:#ecedde"></div>
<div class="b " style="left:204px;top:710px;width:1021px;height:16px;background:#d6d7c8"></div>
<span class="t dv" style="font-size:11px;line-height:15px;top:710.5px;color:#111;letter-spacing:0.508px;left:206.0px;">CONTRIBUINTE</span>
<span class="t dv" style="font-size:11px;line-height:15px;top:710.5px;color:#111;letter-spacing:0.537px;left:324.0px;">IMPOSTO PREDIAL</span>
<span class="t dv" style="font-size:11px;line-height:15px;top:710.5px;color:#111;letter-spacing:-0.165px;left:478.0px;">3562</span>
<span class="t dv" style="font-size:11px;line-height:15px;top:710.5px;color:#111;letter-spacing:-0.165px;left:512.0px;">2003</span>
<span class="t dv" style="font-size:11px;line-height:15px;top:710.5px;color:#111;letter-spacing:-0.165px;left:570.0px;">2003</span>
<span class="t dv" style="font-size:11px;line-height:15px;top:710.5px;color:#111;letter-spacing:-0.061px;left:637.0px;">000000156</span>
<span class="t dv" style="font-size:11px;line-height:15px;top:710.5px;color:#111;letter-spacing:0.417px;left:784.0px;">AZINETE XAVIER COSTA,32751796168</span>
<div class="b " style="left:204px;top:727px;width:1021px;height:18px;background:#ecedde"></div>
<span class="t dv" style="font-size:11px;line-height:15px;top:728.5px;color:#111;letter-spacing:0.508px;left:206.0px;">CONTRIBUINTE</span>
<span class="t dv" style="font-size:11px;line-height:15px;top:728.5px;color:#111;letter-spacing:0.537px;left:324.0px;">IMPOSTO PREDIAL</span>
<span class="t dv" style="font-size:11px;line-height:15px;top:728.5px;color:#111;letter-spacing:-0.165px;left:478.0px;">3563</span>
<span class="t dv" style="font-size:11px;line-height:15px;top:728.5px;color:#111;letter-spacing:-0.165px;left:512.0px;">2003</span>
<span class="t dv" style="font-size:11px;line-height:15px;top:728.5px;color:#111;letter-spacing:-0.165px;left:570.0px;">2003</span>
<span class="t dv" style="font-size:11px;line-height:15px;top:728.5px;color:#111;letter-spacing:-0.061px;left:637.0px;">000000073</span>
<span class="t dv" style="font-size:11px;line-height:15px;top:728.5px;color:#111;letter-spacing:0.531px;left:784.0px;">RAIMUNDO MOREIRA REIS</span>
<div class="b " style="left:204px;top:745px;width:1021px;height:18px;background:#ecedde"></div>
<div class="b " style="left:204px;top:746px;width:1021px;height:16px;background:#d6d7c8"></div>
<span class="t dv" style="font-size:11px;line-height:15px;top:746.5px;color:#111;letter-spacing:0.508px;left:206.0px;">CONTRIBUINTE</span>
<span class="t dv" style="font-size:11px;line-height:15px;top:746.5px;color:#111;letter-spacing:0.537px;left:324.0px;">IMPOSTO PREDIAL</span>
<span class="t dv" style="font-size:11px;line-height:15px;top:746.5px;color:#111;letter-spacing:-0.165px;left:478.0px;">4334</span>
<span class="t dv" style="font-size:11px;line-height:15px;top:746.5px;color:#111;letter-spacing:-0.165px;left:512.0px;">2004</span>
<span class="t dv" style="font-size:11px;line-height:15px;top:746.5px;color:#111;letter-spacing:-0.165px;left:570.0px;">2004</span>
<span class="t dv" style="font-size:11px;line-height:15px;top:746.5px;color:#111;letter-spacing:-0.061px;left:637.0px;">000000918</span>
<span class="t dv" style="font-size:11px;line-height:15px;top:746.5px;color:#111;letter-spacing:0.417px;left:784.0px;">J.F Construcoes e Servicos LTDA</span>
<div class="b " style="left:204px;top:763px;width:1021px;height:18px;background:#ecedde"></div>
<span class="t dv" style="font-size:11px;line-height:15px;top:764.5px;color:#111;letter-spacing:0.508px;left:206.0px;">CONTRIBUINTE</span>
<span class="t dv" style="font-size:11px;line-height:15px;top:764.5px;color:#111;letter-spacing:0.537px;left:324.0px;">IMPOSTO PREDIAL</span>
<span class="t dv" style="font-size:11px;line-height:15px;top:764.5px;color:#111;letter-spacing:-0.165px;left:478.0px;">4335</span>
<span class="t dv" style="font-size:11px;line-height:15px;top:764.5px;color:#111;letter-spacing:-0.165px;left:512.0px;">2004</span>
<span class="t dv" style="font-size:11px;line-height:15px;top:764.5px;color:#111;letter-spacing:-0.165px;left:570.0px;">2004</span>
<span class="t dv" style="font-size:11px;line-height:15px;top:764.5px;color:#111;letter-spacing:-0.061px;left:637.0px;">000000915</span>
<span class="t dv" style="font-size:11px;line-height:15px;top:764.5px;color:#111;letter-spacing:0.361px;left:784.0px;">Construtora Lego LTDA</span>
<div class="b " style="left:204px;top:781px;width:1021px;height:18px;background:#ecedde"></div>
<div class="b " style="left:204px;top:782px;width:1021px;height:16px;background:#d6d7c8"></div>
<span class="t dv" style="font-size:11px;line-height:15px;top:782.5px;color:#111;letter-spacing:0.508px;left:206.0px;">CONTRIBUINTE</span>
<span class="t dv" style="font-size:11px;line-height:15px;top:782.5px;color:#111;letter-spacing:0.537px;left:324.0px;">IMPOSTO PREDIAL</span>
<span class="t dv" style="font-size:11px;line-height:15px;top:782.5px;color:#111;letter-spacing:-0.165px;left:478.0px;">4336</span>
<span class="t dv" style="font-size:11px;line-height:15px;top:782.5px;color:#111;letter-spacing:-0.165px;left:512.0px;">2004</span>
<span class="t dv" style="font-size:11px;line-height:15px;top:782.5px;color:#111;letter-spacing:-0.165px;left:570.0px;">2004</span>
<span class="t dv" style="font-size:11px;line-height:15px;top:782.5px;color:#111;letter-spacing:-0.061px;left:637.0px;">000002407</span>
<span class="t dv" style="font-size:11px;line-height:15px;top:782.5px;color:#111;letter-spacing:0.530px;left:784.0px;">CAMPESATTO CONSTRUTORA LTDA</span>
<span class="t dv" style="font-size:11px;line-height:15px;top:350.5px;color:#111;left:1013.0px;">A</span>
<svg class="b" style="left:194px;top:352px" width="7" height="12" viewBox="0 0 7 12"><path d="M0.500 0.500v11L6.500 6z" fill="#000"/></svg>
<div class="b " style="left:1420px;top:331px;width:17px;height:470px;background:#fbfbfb"></div>
<div class="b " style="left:1422px;top:349px;width:12px;height:440px;background:#f0f0f0"></div>
<div class="b " style="left:1422px;top:350px;width:12px;height:195px;background:#cdcdcd"></div>
<div class="b " style="left:1437px;top:329px;width:1px;height:473px;background:#6e6e6e"></div>
<svg class="b" style="left:1423px;top:336px" width="10" height="8" viewBox="0 0 10 8"><path d="M1.500 6l3.500-3.500 3.500 3.500" fill="none" stroke="#222" stroke-width="1.800"/></svg>
<svg class="b" style="left:1423px;top:786px" width="10" height="8" viewBox="0 0 10 8"><path d="M1.500 2l3.500 3.500 3.500-3.500" fill="none" stroke="#222" stroke-width="1.800"/></svg>
<div class="b " style="left:190px;top:803px;width:1248px;height:38px;background:#f0f0f0;border:1px solid #a9a9a9;box-shadow:inset 1px 1px 0 #fff"></div>
<div class="b " style="left:195px;top:808px;width:32px;height:28px;background:#f1f1f1;border:1px solid #d6d6d6;box-shadow:inset 1px 1px 0 #fbfbfb"></div>
<svg class="b" style="left:197px;top:810px" width="28" height="24" viewBox="0 0 28 24"><rect x="3.500" y="3.500" width="21" height="15" fill="#dbe9f8" stroke="#22345c"/><rect x="6" y="6" width="6" height="9" fill="#9fbbe0"/><path d="M14 7h8M14 10h8M14 13h6" stroke="#7f9fc8"/><rect x="2" y="14" width="8" height="8" fill="#fff" stroke="#234"/><path d="M3.500 15.500h4M3.500 15.500v4M3.500 15.500l5 5" stroke="#123" stroke-width="1.300" fill="none"/></svg>
<div class="b " style="left:233px;top:808px;width:32px;height:28px;background:#f1f1f1;border:1px solid #d6d6d6;box-shadow:inset 1px 1px 0 #fbfbfb"></div>
<svg class="b" style="left:235px;top:810px" width="28" height="24" viewBox="0 0 28 24"><rect x="3.500" y="3.500" width="21" height="15" fill="#dbe9f8" stroke="#22345c"/><rect x="6" y="6" width="6" height="9" fill="#9fbbe0"/><path d="M14 7h8M14 10h8M14 13h6" stroke="#7f9fc8"/><rect x="2" y="14" width="8" height="8" fill="#fff" stroke="#234"/><path d="M9 18h-5.500M6 15.500l-2.500 2.500 2.500 2.500" stroke="#123" stroke-width="1.300" fill="none"/></svg>
<div class="b " style="left:270px;top:808px;width:32px;height:28px;background:#f1f1f1;border:1px solid #d6d6d6;box-shadow:inset 1px 1px 0 #fbfbfb"></div>
<svg class="b" style="left:272px;top:810px" width="28" height="24" viewBox="0 0 28 24"><rect x="3.500" y="3.500" width="21" height="15" fill="#dbe9f8" stroke="#22345c"/><rect x="6" y="6" width="6" height="9" fill="#9fbbe0"/><path d="M14 7h8M14 10h8M14 13h6" stroke="#7f9fc8"/><rect x="18" y="14" width="8" height="8" fill="#fff" stroke="#234"/><path d="M19 18h5.500M22 15.500l2.500 2.500-2.500 2.500" stroke="#123" stroke-width="1.300" fill="none"/></svg>
<div class="b " style="left:308px;top:808px;width:32px;height:28px;background:#f1f1f1;border:1px solid #d6d6d6;box-shadow:inset 1px 1px 0 #fbfbfb"></div>
<svg class="b" style="left:310px;top:810px" width="28" height="24" viewBox="0 0 28 24"><rect x="3.500" y="3.500" width="21" height="15" fill="#dbe9f8" stroke="#22345c"/><rect x="6" y="6" width="6" height="9" fill="#9fbbe0"/><path d="M14 7h8M14 10h8M14 13h6" stroke="#7f9fc8"/><rect x="18" y="14" width="8" height="8" fill="#fff" stroke="#234"/><path d="M24.500 15.500h-4M24.500 15.500v4M24.500 15.500l-5 5" stroke="#123" stroke-width="1.300" fill="none"/></svg>
<div class="b " style="left:1125px;top:808px;width:97px;height:28px;background:#ccc;border:1px solid #bdbdbd;"></div>
<svg class="b" style="left:1130px;top:811px" width="28" height="24" viewBox="0 0 28 24"><rect x="2.500" y="2.500" width="21" height="15" fill="#ddd" stroke="#777"/><path d="M6 5v10q3 3 6 0M14 9l3 5 5-9" fill="none" stroke="#8a8a8a" stroke-width="1.500"/><path d="M4 20h18" stroke="#999"/></svg>
<span class="t dvc" style="font-size:11px;line-height:15px;top:814.5px;color:#858585;letter-spacing:-0.045px;left:1164.0px;font-weight:bold;text-shadow:1px 1px 0 #f4f4f4;">Confirma</span>
<div class="b " style="left:1228px;top:808px;width:98px;height:28px;background:#ccc;border:1px solid #bdbdbd;"></div>
<svg class="b" style="left:1233px;top:811px" width="28" height="24" viewBox="0 0 28 24"><rect x="2.500" y="2.500" width="19" height="14" fill="#ddd" stroke="#666"/><path d="M8 8l14 14M22 8l-14 14" stroke="#444" stroke-width="2.500"/></svg>
<span class="t dvc" style="font-size:11px;line-height:15px;top:814.5px;color:#858585;letter-spacing:0.062px;left:1270.0px;font-weight:bold;text-shadow:1px 1px 0 #f4f4f4;">Cancela</span>
<div class="b " style="left:1340px;top:808px;width:96px;height:28px;background:#e1e1e1;border:1px solid #adadad;"></div>
<svg class="b" style="left:1344px;top:811px" width="30" height="24" viewBox="0 0 30 24"><rect x="2.500" y="2.500" width="20" height="14" fill="#dce8f8" stroke="#456aa6"/><rect x="3" y="3" width="19" height="3" fill="#6d92cf"/><path d="M8 9h6M8 12h8" stroke="#c57fb0"/><path d="M12 15h7v-3l7 5-7 5v-3h-7z" fill="#2f8be0" stroke="#1a62b0" stroke-width=".7"/></svg>
<span class="t dvc" style="font-size:11px;line-height:15px;top:814.5px;color:#000;letter-spacing:-0.358px;left:1393.0px;font-weight:bold;">Sair</span>
<div class="b " style="left:0px;top:842px;width:1440px;height:18px;background:#f4f4f4;border-top:1px solid #fff"></div>
<div class="b " style="left:0px;top:841px;width:1440px;height:1px;background:#a0a0a0"></div>
<div class="b " style="left:119px;top:844px;width:1px;height:14px;background:#d0d0d0"></div>
<div class="b " style="left:252px;top:844px;width:1px;height:14px;background:#d0d0d0"></div>
<div class="b " style="left:345px;top:844px;width:1px;height:14px;background:#d0d0d0"></div>
<div class="b " style="left:446px;top:844px;width:1px;height:14px;background:#d0d0d0"></div>
<div class="b " style="left:541px;top:844px;width:1px;height:14px;background:#d0d0d0"></div>
<span class="t ls" style="font-size:12px;line-height:16px;top:843.0px;color:#000;letter-spacing:-0.217px;left:5.0px;font-weight:bold;">www.fiorilli.com.br</span>
<span class="t ls" style="font-size:12px;line-height:16px;top:843.0px;color:#000;letter-spacing:-0.191px;left:138.0px;font-weight:bold;">Usuário: RAQUEL</span>
<span class="t ls" style="font-size:12px;line-height:16px;top:843.0px;color:#444;letter-spacing:-0.567px;left:262.0px;">Vrs. 7.5.15.543</span>
<span class="t ls" style="font-size:12px;line-height:16px;top:843.0px;color:#444;letter-spacing:-0.898px;left:358.0px;">2024</span>
<span class="t ls" style="font-size:12px;line-height:16px;top:843.0px;color:#444;letter-spacing:-0.619px;left:454.0px;">TABDEF: 5270</span>
<span class="t ls" style="font-size:12px;line-height:16px;top:843.0px;color:#000;letter-spacing:0.045px;left:550.0px;font-weight:bold;">Sistema Integrado de Arrecadação Copyright © 2006 - 2024</span>
<div class="b " style="left:0px;top:860px;width:1440px;height:40px;background:#09121a"></div>
<div class="b " style="left:343px;top:860px;width:48px;height:40px;background:#2a3236"></div>
<svg class="b" style="left:16px;top:872px" width="16" height="16" viewBox="0 0 16 16"><path d="M0 2.300l6.500-.9v6.100h-6.500zM7.300 1.300l8.700-1.300v7.500h-8.700zM0 8.300h6.500v6.200l-6.500-.9zM7.300 8.300h8.700v7.700l-8.700-1.300z" fill="#fff"/></svg>
<svg class="b" style="left:63px;top:871px" width="18" height="18" viewBox="0 0 18 18"><circle cx="10.500" cy="7" r="5.500" fill="none" stroke="#fff" stroke-width="1.400"/><path d="M6.500 11L1 17" stroke="#fff" stroke-width="1.400"/></svg>
<svg class="b" style="left:111px;top:872px" width="18" height="16" viewBox="0 0 18 16" fill="none" stroke="#fff" stroke-width="1.300"><rect x="2.500" y="4" width="9" height="8"/><path d="M0.500 1.500h13M0.500 14.500h13M15.500 2v3M15.500 7v7"/></svg>
<svg class="b" style="left:158px;top:866px" width="28" height="28" viewBox="0 0 28 28"><path d="M14 6a8.500 8.500 0 1 0 8 11.500h-5a4 4 0 0 1-7-1.500h12.500a8.500 8.500 0 0 0-8.500-10zM10 12.500a4 4 0 0 1 7.800 0z" fill="#39a9e8"/><path d="M3 24c-3-6 8-18 20-20 3 0 3 3 1 6" fill="none" stroke="#f2c21b" stroke-width="1.600"/></svg>
<svg class="b" style="left:207px;top:868px" width="26" height="24" viewBox="0 0 26 24"><path d="M1 3h9l2 2h13v17h-24z" fill="#f4c64a"/><path d="M1 8h24v14h-24z" fill="#fbe394"/><path d="M5 13h16v9h-16z" fill="#3b9ae0"/><path d="M9 17h8v5h-8z" fill="#dff0fb"/></svg>
<svg class="b" style="left:256px;top:868px" width="26" height="26" viewBox="0 0 26 26"><path d="M13.0 0.5L15.0 6.8L20.3 2.9L18.3 9.2L24.9 9.1L19.5 13.0L24.9 16.9L18.3 16.8L20.3 23.1L15.0 19.2L13.0 25.5L11.0 19.2L5.7 23.1L7.7 16.8L1.1 16.9L6.5 13.0L1.1 9.1L7.7 9.2L5.7 2.9L11.0 6.8z" fill="#c9570f"/><path d="M13.0 4.0L14.5 8.2L18.3 5.7L17.0 10.1L21.6 10.2L18.0 13.0L21.6 15.8L17.0 15.9L18.3 20.3L14.5 17.8L13.0 22.0L11.5 17.8L7.7 20.3L9.0 15.9L4.4 15.8L8.0 13.0L4.4 10.2L9.0 10.1L7.7 5.7L11.5 8.2z" fill="#ee8a2c"/><circle cx="13" cy="13" r="4.500" fill="#f6a94e"/><circle cx="13" cy="13" r="2" fill="#8a3508"/></svg>
<svg class="b" style="left:305px;top:868px" width="26" height="26" viewBox="0 0 26 26"><path d="M13.0 0.5L15.0 6.8L20.3 2.9L18.3 9.2L24.9 9.1L19.5 13.0L24.9 16.9L18.3 16.8L20.3 23.1L15.0 19.2L13.0 25.5L11.0 19.2L5.7 23.1L7.7 16.8L1.1 16.9L6.5 13.0L1.1 9.1L7.7 9.2L5.7 2.9L11.0 6.8z" fill="#c9570f"/><path d="M13.0 4.0L14.5 8.2L18.3 5.7L17.0 10.1L21.6 10.2L18.0 13.0L21.6 15.8L17.0 15.9L18.3 20.3L14.5 17.8L13.0 22.0L11.5 17.8L7.7 20.3L9.0 15.9L4.4 15.8L8.0 13.0L4.4 10.2L9.0 10.1L7.7 5.7L11.5 8.2z" fill="#ee8a2c"/><circle cx="13" cy="13" r="4.500" fill="#f6a94e"/><circle cx="13" cy="13" r="2" fill="#8a3508"/></svg>
<svg class="b" style="left:354px;top:868px" width="26" height="26" viewBox="0 0 26 26"><path d="M13.0 0.5L15.0 6.8L20.3 2.9L18.3 9.2L24.9 9.1L19.5 13.0L24.9 16.9L18.3 16.8L20.3 23.1L15.0 19.2L13.0 25.5L11.0 19.2L5.7 23.1L7.7 16.8L1.1 16.9L6.5 13.0L1.1 9.1L7.7 9.2L5.7 2.9L11.0 6.8z" fill="#c9570f"/><path d="M13.0 4.0L14.5 8.2L18.3 5.7L17.0 10.1L21.6 10.2L18.0 13.0L21.6 15.8L17.0 15.9L18.3 20.3L14.5 17.8L13.0 22.0L11.5 17.8L7.7 20.3L9.0 15.9L4.4 15.8L8.0 13.0L4.4 10.2L9.0 10.1L7.7 5.7L11.5 8.2z" fill="#ee8a2c"/><circle cx="13" cy="13" r="4.500" fill="#f6a94e"/><circle cx="13" cy="13" r="2" fill="#8a3508"/></svg>
<div class="b " style="left:200px;top:898px;width:38px;height:2px;background:#76b9ed"></div>
<div class="b " style="left:249px;top:898px;width:39px;height:2px;background:#76b9ed"></div>
<div class="b " style="left:298px;top:898px;width:39px;height:2px;background:#76b9ed"></div>
<div class="b " style="left:343px;top:898px;width:48px;height:2px;background:#76b9ed"></div>
<svg class="b" style="left:1213px;top:875px" width="14" height="9" viewBox="0 0 14 9"><path d="M1.500 7.500l5.500-5.500 5.500 5.500" fill="none" stroke="#fff" stroke-width="1.300"/></svg>
<svg class="b" style="left:1236px;top:872px" width="18" height="16" viewBox="0 0 18 16" fill="none" stroke="#fff" stroke-width="1.200"><rect x="5.500" y="2.500" width="11" height="8"/><path d="M8 14.500h6M11 10.500v4"/><rect x="1.500" y="1.500" width="4" height="4" fill="#09121a"/><path d="M3.500 5.500v6h2"/></svg>
<svg class="b" style="left:1260px;top:872px" width="18" height="16" viewBox="0 0 18 16" fill="none" stroke="#fff" stroke-width="1.200"><path d="M1.500 5.500h2.500l3.500-3.500v12l-3.500-3.500h-2.500z"/><path d="M9.500 5.500q1.500 2.500 0 5M12 3.500q2.500 4.500 0 9M14.500 1.500q3.500 6.500 0 13"/></svg>
<span class="t ls" style="font-size:12px;line-height:16px;top:863.5px;color:#fff;letter-spacing:-0.502px;left:1286.0px;">POR</span>
<span class="t ls" style="font-size:12px;line-height:16px;top:880.5px;color:#fff;letter-spacing:-1.004px;left:1285.0px;">PTB2</span>
<span class="t ls" style="font-size:12px;line-height:16px;top:863.5px;color:#fff;letter-spacing:-1.007px;left:1339.0px;">14:02</span>
<span class="t ls" style="font-size:12px;line-height:16px;top:880.5px;color:#fff;letter-spacing:-0.118px;left:1322.0px;">09/07/2024</span>
<svg class="b" style="left:1398px;top:870px" width="26" height="26" viewBox="0 0 26 26"><path d="M2.500 2.500h15v12h-9l-3 3v-3h-3z" fill="#fff"/><path d="M5 6h10M5 8.500h10M5 11h10" stroke="#09121a" stroke-width="1"/><circle cx="16.500" cy="17" r="6" fill="#333" stroke="#bbb" stroke-width="1"/></svg>
<span class="t ls" style="font-size:9px;line-height:13px;top:880.5px;color:#fff;left:1412.0px;font-weight:bold;">1</span>
<div class="b " style="left:1435px;top:860px;width:1px;height:40px;background:#555"></div>
<div class="b " style="left:424px;top:273px;width:592px;height:345px;background:#f0f0f0;border:1px solid #6e6e6e"></div>
<div class="b " style="left:425px;top:274px;width:590px;height:27px;background:#fff"></div>
<span class="t ls" style="font-size:12px;line-height:16px;top:278.0px;color:#000;letter-spacing:-0.101px;left:429.0px;">Insconcistencia dos Arquivos de Retorno Convênios</span>
<div class="b " style="left:425px;top:300px;width:590px;height:1px;background:#a6a6a6"></div>
<div class="b " style="left:425px;top:301px;width:590px;height:2px;background:#f4f4f4"></div>
<div class="b " style="left:429px;top:303px;width:582px;height:22px;background:#447b84;border:1px solid #3a656b;border-right:none"></div>
<div class="b " style="left:425px;top:325px;width:590px;height:1px;background:#fff"></div>
<div class="b " style="left:429px;top:326px;width:582px;height:6px;background:#f6ebe6"></div>
<span class="t dv" style="font-size:13px;line-height:18px;top:306.0px;color:#e4ffff;letter-spacing:-0.039px;left:432.5px;font-weight:bold;">Insconsistencia dos Arquivos Convênios</span>
<div class="b " style="left:430px;top:333px;width:546px;height:46px;background:#f3f3f3;border:1px solid #f8f8f8;border-top:none"></div>
<span class="t dv" style="font-size:11px;line-height:15px;top:330.5px;color:#111;letter-spacing:0.288px;left:445.0px;background:#f0f0f0;padding:0 2px;margin-left:-2px;">Selecione o Arquivo Processado</span>
<div class="b inp" style="left:440px;top:349px;width:81px;height:21px;background:#fff;border:1px solid #7a7a7a"></div>
<div class="b " style="left:524px;top:349px;width:20px;height:21px;background:#e1e1e1;border:1px solid #adadad"></div>
<svg class="b" style="left:524px;top:349px" width="20" height="21" viewBox="0 0 21 21"><circle cx="12.500" cy="8" r="5" fill="#9ec9f2" stroke="#3f7fc6" stroke-width="1.600"/><circle cx="11.500" cy="7" r="2" fill="#e8f4ff"/><path d="M9 11.500l-5.500 6" stroke="#e8a13a" stroke-width="2.800" stroke-linecap="round"/></svg>
<span class="t dv" style="font-size:11px;line-height:15px;top:350.5px;color:#111;left:550.0px;">...</span>
<div class="b " style="left:574px;top:439px;width:292px;height:15px;background:#fff;border:1px solid #bcbcbc"></div>
<div class="b " style="left:433px;top:471px;width:168px;height:44px;border:1px solid #fafafa;box-shadow:inset 1px 1px 0 #e3e3e3, 1px 1px 0 #e3e3e3;background:#f2f2f2"></div>
<span class="t dv" style="font-size:11px;line-height:15px;top:464.5px;color:#111;letter-spacing:0.137px;left:444.0px;background:#f0f0f0;padding:0 3px;margin-left:-3px;">Ordem</span>
<div class="b " style="left:609px;top:471px;width:192px;height:44px;border:1px solid #fafafa;box-shadow:inset 1px 1px 0 #e3e3e3, 1px 1px 0 #e3e3e3;background:#f2f2f2"></div>
<span class="t dv" style="font-size:11px;line-height:15px;top:464.5px;color:#111;letter-spacing:0.169px;left:616.0px;background:#f0f0f0;padding:0 3px;margin-left:-3px;">Data de Movimento</span>
<div class="b " style="left:808px;top:471px;width:201px;height:44px;border:1px solid #fafafa;box-shadow:inset 1px 1px 0 #e3e3e3, 1px 1px 0 #e3e3e3;background:#f2f2f2"></div>
<span class="t dv" style="font-size:11px;line-height:15px;top:464.5px;color:#111;letter-spacing:0.263px;left:819.0px;background:#f0f0f0;padding:0 3px;margin-left:-3px;">Código da Conta</span>
<div class="b " style="left:433px;top:532px;width:222px;height:41px;border:1px solid #fafafa;box-shadow:inset 1px 1px 0 #e3e3e3, 1px 1px 0 #e3e3e3;background:#f2f2f2"></div>
<span class="t dv" style="font-size:11px;line-height:15px;top:525.5px;color:#111;letter-spacing:0.271px;left:444.0px;background:#f0f0f0;padding:0 3px;margin-left:-3px;">Filtros do Retorno</span>
<svg class="b" style="left:439px;top:481px" width="14" height="14" viewBox="0 0 14 14"><circle cx="7" cy="7" r="6" fill="#fff" stroke="#333"/><circle cx="7" cy="7" r="3.200" fill="#222"/></svg>
<svg class="b" style="left:439px;top:498px" width="14" height="14" viewBox="0 0 14 14"><circle cx="7" cy="7" r="6" fill="#fff" stroke="#333"/></svg>
<span class="t dv" style="font-size:11px;line-height:15px;top:480.5px;color:#111;letter-spacing:0.239px;left:456.0px;">Sequencial Arquivo</span>
<span class="t dv" style="font-size:11px;line-height:15px;top:497.5px;color:#111;letter-spacing:0.400px;left:456.0px;">Cadastro</span>
<div class="b inp" style="left:614px;top:487px;width:74px;height:21px;background:#fff;border:1px solid #7a7a7a"></div>
<span class="t dv" style="font-size:11px;line-height:15px;top:490.0px;color:#111;letter-spacing:0.289px;left:617.0px;">28/06/2024</span>
<span class="t dv" style="font-size:11px;line-height:15px;top:490.5px;color:#111;letter-spacing:-0.116px;left:694.0px;font-weight:bold;">Até</span>
<div class="b inp" style="left:722px;top:487px;width:74px;height:21px;background:#fff;border:1px solid #7a7a7a"></div>
<span class="t dv" style="font-size:11px;line-height:15px;top:490.0px;color:#111;letter-spacing:0.289px;left:725.0px;">28/06/2024</span>
<div class="b inp" style="left:815px;top:487px;width:50px;height:21px;background:#fff;border:1px solid #7a7a7a"></div>
<span class="t dv" style="font-size:11px;line-height:15px;top:490.0px;color:#111;letter-spacing:-0.498px;left:818.0px;">271</span>
<div class="b " style="left:869px;top:488px;width:20px;height:20px;background:#dcdcdc;border:1px solid #c4c4c4"></div>
<svg class="b" style="left:869px;top:488px" width="20" height="20" viewBox="0 0 21 21"><circle cx="12.500" cy="8" r="4.500" fill="#e6e6e6" stroke="#9d9d9d" stroke-width="1.500"/><path d="M9.500 11.500l-6 6.500" stroke="#a8a8a8" stroke-width="2.500" stroke-linecap="round"/></svg>
<span class="t dv" style="font-size:11px;line-height:15px;top:490.5px;color:#111;letter-spacing:-0.116px;left:896.0px;font-weight:bold;">Até</span>
<div class="b inp" style="left:926px;top:487px;width:53px;height:21px;background:#fff;border:1px solid #7a7a7a"></div>
<span class="t dv" style="font-size:11px;line-height:15px;top:490.0px;color:#111;letter-spacing:-0.498px;left:929.0px;">271</span>
<div class="b " style="left:982px;top:488px;width:20px;height:20px;background:#dcdcdc;border:1px solid #c4c4c4"></div>
<svg class="b" style="left:982px;top:488px" width="20" height="20" viewBox="0 0 21 21"><circle cx="12.500" cy="8" r="4.500" fill="#e6e6e6" stroke="#9d9d9d" stroke-width="1.500"/><path d="M9.500 11.500l-6 6.500" stroke="#a8a8a8" stroke-width="2.500" stroke-linecap="round"/></svg>
<div class="b inp" style="left:444px;top:544px;width:200px;height:21px;background:#fff;border:1px solid #7a7a7a"></div>
<svg class="b" style="left:629px;top:551px" width="12" height="8" viewBox="0 0 12 8"><path d="M1.500 1.500l4.500 4.500 4.500-4.500" fill="none" stroke="#444" stroke-width="1.200"/></svg>
<div class="b " style="left:425px;top:577px;width:590px;height:1px;background:#a0a0a0"></div>
<div class="b " style="left:425px;top:578px;width:590px;height:1px;background:#fff"></div>
<div class="b btn" style="left:431px;top:584px;width:95px;height:29px;background:#e1e1e1;border:1px solid #adadad;"></div>
<svg class="b" style="left:437px;top:586px" width="28" height="26" viewBox="0 0 28 26"><path d="M9 3h7v19h-7z" fill="#f5e27a"/><path d="M14 2h4v21h-4z" fill="#e9c43a"/><path d="M2 18l8-3 6 3-8 4z" fill="#8c8ca0"/><path d="M3 19l6 4 7-3" fill="none" stroke="#444" stroke-width="1"/><path d="M10 15l2 4" stroke="#c33" stroke-width="1.500"/></svg>
<span class="t dvc" style="font-size:11px;line-height:15px;top:592.0px;color:#000;letter-spacing:0.265px;left:474.0px;font-weight:bold;">Layout</span>
<div class="b btn" style="left:809px;top:584px;width:100px;height:30px;background:#e1eefa;border:2px solid #1f6fc0;"></div>
<div class="b " style="left:812px;top:587px;width:94px;height:24px;border:1px dotted #222;box-sizing:border-box"></div>
<svg class="b" style="left:815px;top:587px" width="28" height="26" viewBox="0 0 28 26"><rect x="3.500" y="8.500" width="20" height="14" fill="#e8eef6" stroke="#5a6a86"/><rect x="3.500" y="8.500" width="20" height="4" fill="#b9c6dc" stroke="#5a6a86"/><path d="M8 8v-5h8v5M10 5h4" fill="#fff" stroke="#888"/><rect x="7" y="14" width="12" height="5" fill="#fbfbfb" stroke="#a0a8b8"/><path d="M12 2l3 4" stroke="#c7a" stroke-width="1"/></svg>
<span class="t dvc" style="font-size:11px;line-height:15px;top:592.0px;color:#000;letter-spacing:0.295px;left:850.0px;font-weight:bold;">Imprimir</span>
<div class="b btn" style="left:914px;top:584px;width:97px;height:30px;background:#e1e1e1;border:1px solid #adadad;"></div>
<svg class="b" style="left:919px;top:587px" width="30" height="26" viewBox="0 0 30 26"><rect x="2.500" y="3.500" width="20" height="15" fill="#dce8f8" stroke="#456aa6"/><rect x="3" y="4" width="19" height="3" fill="#6d92cf"/><path d="M11 16h7v-3l7 5-7 5v-3h-7z" fill="#22a4dc" stroke="#1a72b0" stroke-width=".7"/></svg>
<span class="t dvc" style="font-size:11px;line-height:15px;top:592.0px;color:#000;letter-spacing:-0.025px;left:967.0px;font-weight:bold;">Sair</span>
</body></html>
